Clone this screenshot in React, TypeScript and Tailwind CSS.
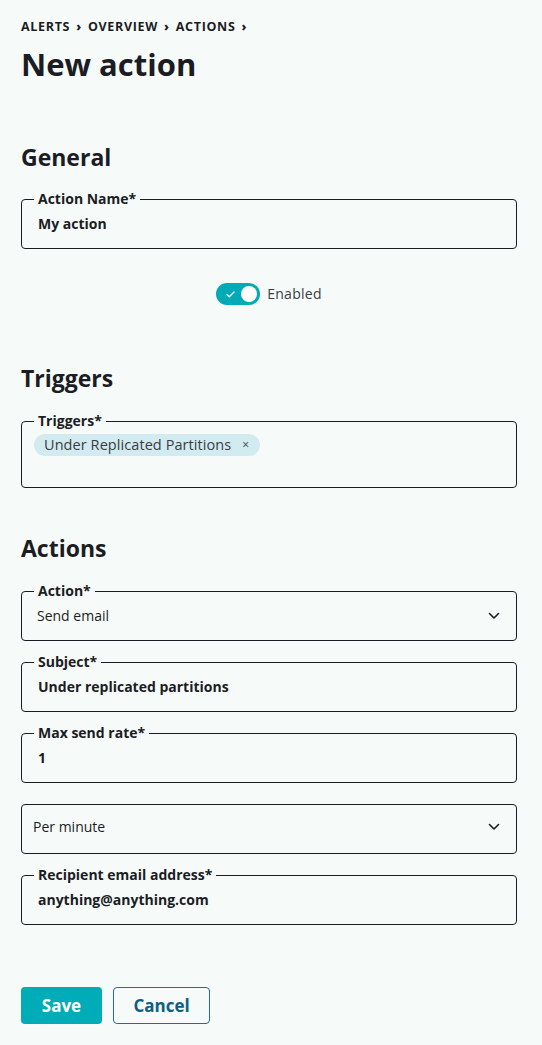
import React from 'react';

const font = { fontFamily: '"Open Sans", "Noto Sans", sans-serif' };

const Chevron = () => (
  <svg width="12" height="8" viewBox="0 0 12 8" fill="none" className="shrink-0">
    <path d="M1.5 1.5L6 6L10.5 1.5" stroke="#1c1c24" strokeWidth="1.6" strokeLinecap="round" strokeLinejoin="round" />
  </svg>
);

const Field: React.FC<{ label: string; children: React.ReactNode; className?: string }> = ({ label, children, className = '' }) => (
  <fieldset className={`border border-[#1c1c24] rounded-[4px] px-3 ${className}`}>
    <legend className="px-1 text-[14px] leading-4 font-bold text-[#1c1c24]">{label}</legend>
    {children}
  </fieldset>
);

const TextField: React.FC<{ label: string; value: string; className?: string }> = ({ label, value, className }) => (
  <Field label={label} className={className}>
    <div className="px-1 pt-[7px] pb-[14px] text-[14px] leading-5 font-bold text-[#1c1c24]">{value}</div>
  </Field>
);

const SelectField: React.FC<{ label: string; value: string; className?: string }> = ({ label, value, className }) => (
  <Field label={label} className={className}>
    <div className="flex items-center justify-between pl-[3px] pr-[4px] pt-[7px] pb-[14px] text-[14px] leading-5 font-medium text-[#1c1c24]">
      <span>{value}</span>
      <Chevron />
    </div>
  </Field>
);

export default function App() {
  return (
    <div className="min-h-[1045px] bg-[#f6fbf9] pl-[21px] pr-[25px] pt-[19px] pb-[21px] text-[#1c1c24]" style={font}>
      <nav className="flex items-center gap-[6px] text-[12.5px] leading-4 font-bold tracking-[0.055em] uppercase">
        <span>Alerts</span>
        <span className="font-extrabold">›</span>
        <span>Overview</span>
        <span className="font-extrabold">›</span>
        <span>Actions</span>
        <span className="font-extrabold">›</span>
      </nav>
      <h1 className="mt-[9px] text-[31px] leading-10 font-bold">New action</h1>

      <h2 className="mt-[57px] text-[23px] leading-8 font-bold">General</h2>
      <TextField label="Action Name*" value="My action" className="mt-[18px]" />

      <div className="mt-[34px] flex items-center justify-center gap-[7px]">
        <div className="h-[22px] w-[44px] rounded-full bg-[#00aab6] flex items-center justify-between pl-[10px] pr-[3px]">
          <svg width="9" height="7" viewBox="0 0 9 7" fill="none">
            <path d="M1 3.6L3.3 5.8L8 1" stroke="white" strokeWidth="1.3" strokeLinecap="round" strokeLinejoin="round" />
          </svg>
          <div className="h-4 w-4 rounded-full bg-white" />
        </div>
        <span className="text-[14px] leading-5 tracking-[0.02em] text-[#3a3d44]">Enabled</span>
      </div>

      <h2 className="mt-[57px] text-[23px] leading-8 font-bold">Triggers</h2>
      <Field label="Triggers*" className="mt-[19px]">
        <div className="pt-[5px] pb-[31px] flex">
          <span className="inline-flex items-center h-[22px] rounded-full bg-[#d2ebf0] pl-[10px] pr-[11px] text-[14.5px] tracking-[0.005em] text-[#3a3d44]">
            Under Replicated Partitions
            <span className="ml-[11px] text-[12px] text-[#3a3d44]">×</span>
          </span>
        </div>
      </Field>

      <h2 className="mt-[44px] text-[23px] leading-8 font-bold">Actions</h2>
      <SelectField label="Action*" value="Send email" className="mt-[19px]" />
      <TextField label="Subject*" value="Under replicated partitions" className="mt-[13px]" />
      <TextField label="Max send rate*" value="1" className="mt-[13px]" />
      <div className="mt-[21px] h-[50px] border border-[#1c1c24] rounded-[4px] flex items-center justify-between pl-[11px] pr-[16px] pb-[4px] text-[14px] leading-5 font-medium">
        <span>Per minute</span>
        <Chevron />
      </div>
      <TextField label="Recipient email address*" value="anything@anything.com" className="mt-[13px]" />

      <div className="mt-[62px] flex gap-[11px]">
        <button className="h-[37px] w-[81px] rounded-[4px] bg-[#00acb8] text-white text-[17px] font-bold">Save</button>
        <button className="h-[37px] w-[97px] rounded-[4px] border border-[#1f6f92] text-[#0d5f84] text-[17px] font-bold bg-transparent">Cancel</button>
      </div>
    </div>
  );
}
